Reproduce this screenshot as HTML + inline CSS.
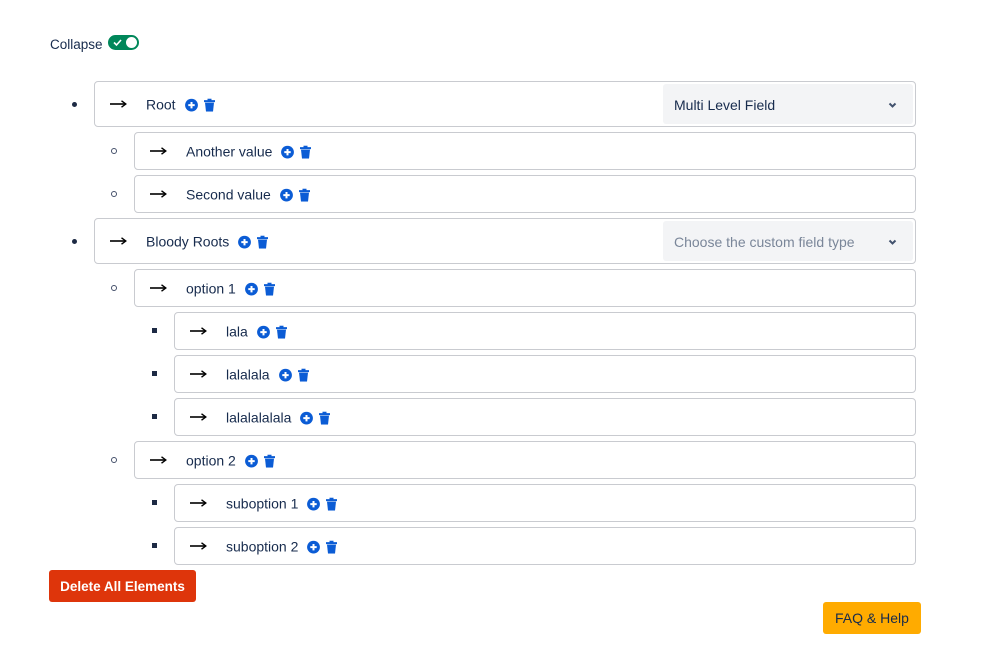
<!DOCTYPE html>
<html><head><meta charset="utf-8"><style>
*{box-sizing:border-box;margin:0;padding:0}
body{width:998px;height:656px;background:#fff;font-family:"Liberation Sans",Arial,sans-serif;color:#172b4d;position:relative;overflow:hidden;font-size:14px}
.a{position:absolute}
.box{position:absolute;border:1px solid #c9cbd0;border-radius:4px;right:82px;background:#fff}
.arrow{position:absolute;left:15px;top:50%;margin-top:-4px;display:block}
.lbl{position:absolute;left:51px;top:50%;transform:translateY(-46%);white-space:nowrap;display:flex;align-items:center;gap:6px}
.lbl svg{display:block}
.lbl .t{margin-right:3px}
.b{position:absolute;}
.disc{width:5px;height:5px;border-radius:50%;background:#1d2a44}
.circ{width:6px;height:6px;border-radius:50%;border:1.3px solid #44506a}
.sq{width:5px;height:5px;background:#1d2a44}
.sel{position:absolute;left:568px;top:2px;bottom:2px;right:2px;background:#f3f4f6;border-radius:3px;padding-left:11px;padding-top:1px;display:flex;align-items:center}
.chev{position:absolute;right:16px;top:50%;margin-top:-2px}
</style></head><body>
<div class="a" style="left:50px;top:37px;font-size:13.5px">Collapse</div>
<div class="a" style="left:108px;top:35px;width:31px;height:15px;border-radius:8px;background:#00875a">
<svg class="a" style="left:5px;top:3px" width="9" height="9" viewBox="0 0 9 9"><path d="M1 4.5L3.5 7L8 2" stroke="#fff" stroke-width="1.6" fill="none"/></svg>
<div class="a" style="left:18px;top:2px;width:11px;height:11px;border-radius:50%;background:#fff"></div></div>

<div class="b disc" style="left:72px;top:102px"></div>
<div class="box" style="left:94px;top:81px;height:46px">ARROW<span class="lbl"><span class="t">Root</span>PLUS TRASH</span><div class="sel">Multi Level Field<svg class="chev" width="9" height="7" viewBox="0 0 9 7"><path d="M1.5 1.5L4.5 4.5L7.5 1.5" stroke="#42526e" stroke-width="2" fill="none"/></svg></div></div>

<div class="b circ" style="left:111px;top:148px"></div>
<div class="box" style="left:134px;top:132px;height:38px">ARROW<span class="lbl"><span class="t">Another value</span>PLUS TRASH</span></div>
<div class="b circ" style="left:111px;top:191px"></div>
<div class="box" style="left:134px;top:175px;height:38px">ARROW<span class="lbl"><span class="t">Second value</span>PLUS TRASH</span></div>

<div class="b disc" style="left:72px;top:239px"></div>
<div class="box" style="left:94px;top:218px;height:46px">ARROW<span class="lbl"><span class="t">Bloody Roots</span>PLUS TRASH</span><div class="sel" style="color:#7a8699">Choose the custom field type<svg class="chev" width="9" height="7" viewBox="0 0 9 7"><path d="M1.5 1.5L4.5 4.5L7.5 1.5" stroke="#42526e" stroke-width="2" fill="none"/></svg></div></div>

<div class="b circ" style="left:111px;top:285px"></div>
<div class="box" style="left:134px;top:269px;height:38px">ARROW<span class="lbl"><span class="t">option 1</span>PLUS TRASH</span></div>
<div class="b sq" style="left:152px;top:328px"></div>
<div class="box" style="left:174px;top:312px;height:38px">ARROW<span class="lbl"><span class="t">lala</span>PLUS TRASH</span></div>
<div class="b sq" style="left:152px;top:371px"></div>
<div class="box" style="left:174px;top:355px;height:38px">ARROW<span class="lbl"><span class="t">lalalala</span>PLUS TRASH</span></div>
<div class="b sq" style="left:152px;top:414px"></div>
<div class="box" style="left:174px;top:398px;height:38px">ARROW<span class="lbl"><span class="t">lalalalalala</span>PLUS TRASH</span></div>

<div class="b circ" style="left:111px;top:457px"></div>
<div class="box" style="left:134px;top:441px;height:38px">ARROW<span class="lbl"><span class="t">option 2</span>PLUS TRASH</span></div>
<div class="b sq" style="left:152px;top:500px"></div>
<div class="box" style="left:174px;top:484px;height:38px">ARROW<span class="lbl"><span class="t">suboption 1</span>PLUS TRASH</span></div>
<div class="b sq" style="left:152px;top:543px"></div>
<div class="box" style="left:174px;top:527px;height:38px">ARROW<span class="lbl"><span class="t">suboption 2</span>PLUS TRASH</span></div>

<div class="a" style="left:49px;top:570px;width:147px;height:32px;background:#de350b;border-radius:3px;color:#fff;font-weight:bold;font-size:13.5px;display:flex;align-items:center;justify-content:center">Delete All Elements</div>
<div class="a" style="left:823px;top:602px;width:98px;height:32px;background:#ffab00;border-radius:3px;color:#172b4d;font-size:14px;display:flex;align-items:center;justify-content:center">FAQ &amp; Help</div>

<script>
var P='<svg width="13" height="13" viewBox="0 0 13 13"><circle cx="6.5" cy="6.5" r="6.4" fill="#0b5cd5"/><path d="M6.5 3.3v6.4M3.3 6.5h6.4" stroke="#fff" stroke-width="2"/></svg>';
var T='<svg width="11" height="13" viewBox="0 0 11 13"><rect x="0" y="1.5" width="11" height="2" fill="#0b5cd5"/><rect x="3.5" y="0" width="4" height="2" fill="#0b5cd5"/><path d="M1 4h9l-1 9h-7z" fill="#0b5cd5"/></svg>';
var A='<svg class="arrow" width="17" height="8" viewBox="0 0 17 8"><path d="M0 4h15" stroke="#000" stroke-width="1.6"/><path d="M11.5 0.8L15.8 4L11.5 7.2" stroke="#000" stroke-width="1.4" fill="none"/></svg>';
document.querySelectorAll('.box').forEach(function(e){e.innerHTML=e.innerHTML.replace('ARROW',A).replace('PLUS',P).replace('TRASH',T);});
</script>
</body></html>
